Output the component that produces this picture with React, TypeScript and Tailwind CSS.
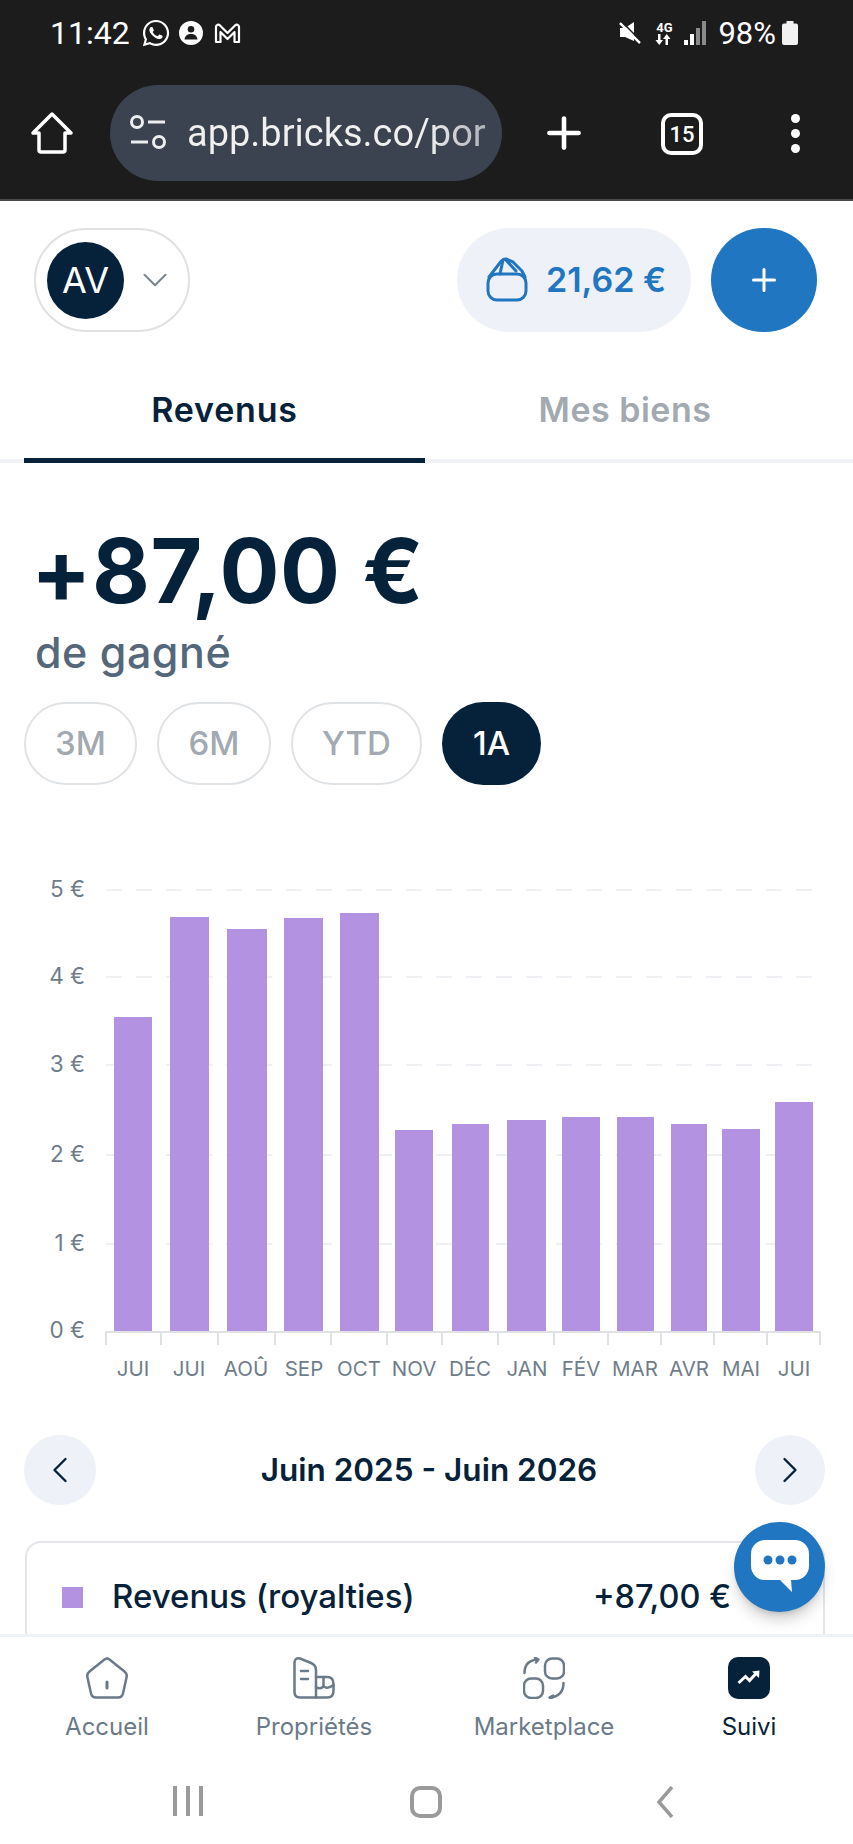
import React from "react";
import { ChevronDown, ChevronLeft, ChevronRight, Plus } from "lucide-react";
import { FaWhatsapp } from "react-icons/fa";

const bars = [
  { label: "JUI", x: 114, w: 38, top: 1016, cx: 133 },
  { label: "JUI", x: 170, w: 39, top: 916, cx: 189 },
  { label: "AOÛ", x: 227, w: 40, top: 928, cx: 246 },
  { label: "SEP", x: 284, w: 39, top: 917, cx: 304 },
  { label: "OCT", x: 340, w: 39, top: 912, cx: 359 },
  { label: "NOV", x: 395, w: 38, top: 1129, cx: 414 },
  { label: "DÉC", x: 452, w: 37, top: 1123, cx: 470 },
  { label: "JAN", x: 507, w: 39, top: 1119, cx: 527 },
  { label: "FÉV", x: 562, w: 38, top: 1116, cx: 581 },
  { label: "MAR", x: 617, w: 37, top: 1116, cx: 635 },
  { label: "AVR", x: 671, w: 36, top: 1123, cx: 689 },
  { label: "MAI", x: 722, w: 38, top: 1128, cx: 741 },
  { label: "JUI", x: 775, w: 38, top: 1101, cx: 794 },
];
const ticks = [106, 161, 218, 275, 331, 387, 442, 498, 554, 608, 661, 714, 767, 820];
const yLabels = [
  { t: "5 €", y: 889 },
  { t: "4 €", y: 976 },
  { t: "3 €", y: 1064 },
  { t: "2 €", y: 1154 },
  { t: "1 €", y: 1243 },
  { t: "0 €", y: 1330 },
];

const Chart = () => (
  <svg width="853" height="510" viewBox="0 870 853 510" className="block">
    {yLabels.slice(0, 5).map((l) => (
      <line key={l.t} x1="106" x2="820" y1={l.y} y2={l.y} stroke="#eef0f3" strokeWidth="2" strokeDasharray="16 14" />
    ))}
    {bars.map((b, i) => (
      <rect key={i} x={b.x} y={b.top} width={b.w} height={1330 - b.top} fill="#b492e2" />
    ))}
    <line x1="105" x2="821" y1="1331" y2="1331" stroke="#dfe1e5" strokeWidth="2" />
    {ticks.map((t) => (
      <line key={t} x1={t} x2={t} y1="1331" y2="1344" stroke="#dfe1e5" strokeWidth="2" />
    ))}
    {yLabels.map((l) => (
      <text key={l.t} x="85" y={l.y + 7} textAnchor="end" fontSize="22.5" fill="#6f7d8b" fontFamily="Inter, sans-serif">
        {l.t}
      </text>
    ))}
    {bars.map((b, i) => (
      <text key={i} x={b.cx} y="1375" textAnchor="middle" fontSize="20.5" fill="#6f7d8b" fontFamily="Inter, sans-serif">
        {b.label}
      </text>
    ))}
  </svg>
);

const StatusBar = () => (
  <div className="flex h-[66px] items-center justify-between pl-[50px] pr-[55px] font-[Roboto,sans-serif] text-white">
    <div className="flex items-center gap-[8px]">
      <span className="mr-[3px] text-[32px] leading-none">11:42</span>
      <FaWhatsapp className="h-[30px] w-[30px]" />
      {/* profil */}
      <svg viewBox="0 0 24 24" className="h-[24px] w-[24px]">
        <circle cx="12" cy="12" r="12" fill="white" />
        <circle cx="12" cy="8.200" r="3.300" fill="#1c1c1c" />
        <path d="M5.500 18.500c.6-4 3-5.500 6.500-5.500s5.900 1.500 6.500 5.500z" fill="#1c1c1c" />
      </svg>
      <svg viewBox="0 0 27 21" className="ml-[3px] h-[21px] w-[27px]" fill="none" stroke="white" strokeWidth="2.200" strokeLinejoin="round">
        <path d="M2 19V4C2 1.500 4.500 1 6 2.500L13.500 10 21 2.500C22.500 1 25 1.500 25 4v15h-4.500V9l-7 7-7-7v10z" />
      </svg>
    </div>
    <div className="flex items-center">
      <svg viewBox="0 0 22 24" className="h-[24px] w-[22px]" fill="white">
        <path d="M1 7h5l9-6v19l-9-4H1z" />
        <path d="M1 2l20 20" stroke="white" strokeWidth="2.500" />
        <path d="M2.500 0.500l20 20" stroke="#1c1c1c" strokeWidth="1.500" />
      </svg>
      <div className="ml-[14px] flex w-[18px] flex-col items-center">
        <span className="text-[13px] font-bold leading-[13px]">4G</span>
        <svg viewBox="0 0 18 11" className="h-[11px] w-[18px]" fill="white">
          <path d="M3 0h2.500v6H8L4.250 11 .5 6H3zM13 11h-2.500V5H8L11.750 0 15.500 5H13z" />
        </svg>
      </div>
      <svg viewBox="0 0 22 24" className="ml-[11px] h-[24px] w-[22px]">
        <rect x="0" y="19" width="4" height="5" fill="white" />
        <rect x="6" y="13" width="4" height="11" fill="white" />
        <rect x="12" y="7" width="4" height="17" fill="#8a8a8a" />
        <rect x="18" y="0" width="4" height="24" fill="#8a8a8a" />
      </svg>
      <span className="ml-[12px] text-[31px] leading-none">98%</span>
      <svg viewBox="0 0 16 24" className="ml-[6px] h-[24px] w-[16px]" fill="#f2f2f2">
        <path d="M4.500 0h7v2.500h2.500a2 2 0 0 1 2 2V22a2 2 0 0 1-2 2H2a2 2 0 0 1-2-2V4.500a2 2 0 0 1 2-2h2.500z" />
      </svg>
    </div>
  </div>
);

const BrowserBar = () => (
  <div className="flex h-[135px] items-start border-b-[2px] border-[#4a4a4a] bg-[#1c1c1c] pt-[19px] text-white">
    <div className="flex h-[96px] w-[110px] items-center justify-center pr-[6px]">
      <svg viewBox="0 0 44 44" className="h-[44px] w-[44px]" fill="none" stroke="white" strokeWidth="3.500" strokeLinejoin="round">
        <path d="M22 3L3 22h6v17a2 2 0 0 0 2 2h22a2 2 0 0 0 2-2V22h6z" />
      </svg>
    </div>
    <div className="flex h-[96px] w-[392px] items-center overflow-hidden rounded-[48px] bg-[#3c4350]">
      <svg viewBox="0 0 38 44" className="ml-[19px] h-[44px] w-[38px]" fill="none" stroke="#eceef0" strokeWidth="3">
        <circle cx="8" cy="11" r="5.500" />
        <path d="M19 11h17M2 31h17" />
        <circle cx="30" cy="31" r="5.500" />
      </svg>
      <span className="ml-[20px] whitespace-nowrap bg-gradient-to-r from-[#f0f0f0] from-80% to-[#b0b3ba] bg-clip-text font-[Roboto,sans-serif] text-[38px] leading-[46px] text-transparent">
        app.bricks.co/por
      </span>
    </div>
    <div className="flex h-[96px] w-[124px] items-center justify-center">
      <Plus size={50} strokeWidth={2.200} />
    </div>
    <div className="flex h-[96px] w-[112px] items-center justify-center pt-[2px]">
      <div className="flex h-[42px] w-[42px] items-center justify-center rounded-[10px] border-[4px] border-white font-[Roboto,sans-serif] text-[22px] font-medium">
        15
      </div>
    </div>
    <div className="flex h-[96px] flex-1 flex-col items-center justify-center gap-[6px]">
      <span className="h-[9px] w-[9px] rounded-full bg-white" />
      <span className="h-[9px] w-[9px] rounded-full bg-white" />
      <span className="h-[9px] w-[9px] rounded-full bg-white" />
    </div>
  </div>
);

const Header = () => (
  <div className="flex items-center justify-between pl-[34px] pr-[36px] pt-[27px]">
    <div className="flex h-[104px] w-[156px] items-center rounded-[52px] border-2 border-[#dfe1e4] pl-[11px]">
      <div className="flex h-[77px] w-[77px] items-center justify-center rounded-full bg-[#06223a] text-[36px] font-normal text-white">
        AV
      </div>
      <ChevronDown size={42} strokeWidth={1.200} className="ml-[10px] text-[#7d8791]" />
    </div>
    <div className="flex items-center gap-[20px]">
      <div className="flex h-[104px] w-[234px] items-center rounded-[52px] bg-[#eef1f7] pl-[21px]">
        {/* sac */}
        <svg viewBox="0 0 60 60" className="h-[60px] w-[60px]" fill="none" stroke="#2176c1" strokeWidth="3" strokeLinejoin="round" strokeLinecap="round">
          <rect x="10" y="24" width="38" height="26" rx="9" />
          <path d="M11 27L21 14Q24 9 28 9L35 12L44 21L47 27" />
          <path d="M25 10L22 24M28 10L38 21" />
        </svg>
        <span className="ml-[8px] text-[34px] font-semibold leading-none text-[#2176c1]">21,62 €</span>
      </div>
      <div className="flex h-[104px] w-[106px] items-center justify-center rounded-full bg-[#2176c1] text-white">
        <Plus size={36} strokeWidth={2} />
      </div>
    </div>
  </div>
);

const Tabs = () => (
  <div className="border-b-[4px] border-[#f0f2f5] px-[24px]">
    <div className="flex h-[127px] pr-[4px]">
      <div className="-mb-[4px] flex h-[131px] w-[401px] items-center justify-center border-b-[5px] border-[#06223a] pt-[28px] text-[34px] font-semibold tracking-[0.8px] text-[#06223a]">
        Revenus
      </div>
      <div className="flex flex-1 items-center justify-center pt-[28px] text-[34px] font-semibold tracking-[0.5px] text-[#a2a9b1]">
        Mes biens
      </div>
    </div>
  </div>
);

const periods = [
  { t: "3M", w: "w-[113px]", on: false },
  { t: "6M", w: "w-[114px]", on: false },
  { t: "YTD", w: "w-[131px]", on: false },
  { t: "1A", w: "w-[99px]", on: true },
];

const Earnings = () => (
  <div className="px-[24px]">
    <div className="pl-[7px] pt-[66px]">
      <div className="text-[89px] font-bold leading-[84px] tracking-[0.6px] text-[#06223a]">+87,00 €</div>
      <div className="ml-[4px] mt-[16px] text-[43px] font-medium leading-[46px] tracking-[0.5px] text-[#55677a]">de gagné</div>
    </div>
    <div className="mt-[27px] flex gap-[20px]">
      {periods.map((p) => (
        <div
          key={p.t}
          className={`${p.w} flex h-[83px] items-center justify-center rounded-[42px] text-[33px] font-medium ${
            p.on ? "bg-[#06223a] text-white" : "border-2 border-[#e0e3e6] text-[#a2a9b1]"
          }`}
        >
          {p.t}
        </div>
      ))}
    </div>
  </div>
);

const DateNav = () => (
  <div className="flex items-center justify-between pl-[24px] pr-[28px]">
    <div className="flex h-[70px] w-[72px] items-center justify-center rounded-full bg-[#eef1f7] text-[#06223a]">
      <ChevronLeft size={44} strokeWidth={1.300} />
    </div>
    <div className="pl-[7px] text-[31.5px] font-semibold text-[#06223a]">Juin 2025 - Juin 2026</div>
    <div className="flex h-[70px] w-[70px] items-center justify-center rounded-full bg-[#eef1f7] text-[#06223a]">
      <ChevronRight size={44} strokeWidth={1.300} />
    </div>
  </div>
);

const SummaryCard = () => (
  <div className="ml-[25px] mr-[28px] mt-[36px] h-[300px] rounded-t-[16px] border-2 border-[#e3e5e8]">
    <div className="flex h-[108px] items-center justify-between pl-[35px] pr-[92px]">
      <div className="flex items-center">
        <span className="h-[21px] w-[21px] bg-[#b492e2]" />
        <span className="ml-[29px] text-[33px] font-medium text-[#06223a]">Revenus (royalties)</span>
      </div>
      <span className="text-[32.5px] font-medium text-[#06223a]">+87,00 €</span>
    </div>
  </div>
);

const navItems = [
  { label: "Accueil", cx: "w-[214px]" },
  { label: "Propriétés", cx: "w-[200px]" },
  { label: "Marketplace", cx: "w-[260px]" },
  { label: "Suivi", cx: "w-[150px]" },
];

const NavIcon = ({ i }: { i: number }) => {
  if (i === 0)
    return (
      <svg viewBox="0 0 42 42" className="h-[42px] w-[42px]" fill="none" stroke="#6b7a89" strokeWidth="2.500" strokeLinecap="round">
        <path d="M18.500 2.500Q21 .5 23.500 2.500L38.500 14.500Q41.500 17 40.500 20.500L37 36.500Q36 40.500 32 40.500H10Q6 40.500 5 36.500L1.500 20.500Q.5 17 3.500 14.500z" />
        <path d="M21 25v6" strokeWidth="3" />
      </svg>
    );
  if (i === 1)
    return (
      <svg viewBox="0 0 42 42" className="h-[42px] w-[42px]" fill="none" stroke="#6b7a89" strokeWidth="2.500" strokeLinecap="round" strokeLinejoin="round">
        <path d="M23 40.500H7Q1.500 40.500 1.500 35V6Q1.500 .5 7 1.500L18 6Q23 8 23 13z" />
        <path d="M23 20H34Q40.500 20 40.500 27V34Q40.500 40.500 34 40.500H23" />
        <path d="M8 14h7M8 22h7M23 30Q28 33 30.500 29Q34 33 40.500 28M30.500 20v9" />
      </svg>
    );
  if (i === 2)
    return (
      <svg viewBox="0 0 42 42" className="h-[42px] w-[42px]" fill="none" stroke="#6b7a89" strokeWidth="2.500" strokeLinecap="round" strokeLinejoin="round">
        <rect x="22" y="1.500" width="19" height="20" rx="7" />
        <rect x="1" y="21.500" width="19" height="19.500" rx="7" />
        <path d="M1.500 16C1.500 8 6 3 15 2.500M12 .8L15.500 2.500L13 5.500" />
        <path d="M40.500 26C40.500 34 36 39.500 27 40.500M30 38.500L26.500 40.500L29 42" />
      </svg>
    );
  return (
    <div className="flex h-[42px] w-[42px] items-center justify-center rounded-[10px] bg-[#06223a]">
      <svg viewBox="0 0 42 42" className="h-[42px] w-[42px]" fill="none" stroke="white" strokeWidth="3">
        <path d="M10.500 26L17.500 19.500L21.500 23.500L28.500 16" />
        <path d="M24 14.500L31.500 13.500L31 21z" fill="white" stroke="none" />
      </svg>
    </div>
  );
};

const BottomNav = () => (
  <div className="flex h-[138px] shrink-0 border-t-[3px] border-[#eef1f6] bg-white pt-[19px]">
    {navItems.map((n, i) => (
      <div key={n.label} className={`${n.cx} flex flex-col items-center`}>
        <div className="flex h-[44px] items-center">
          <NavIcon i={i} />
        </div>
        <span className={`mt-[13px] text-[24px] leading-[28px] ${i === 3 ? "text-[#06223a]" : "text-[#6b7a89]"}`}>{n.label}</span>
      </div>
    ))}
  </div>
);

const AndroidNav = () => (
  <div className="flex h-[72px] shrink-0 items-start bg-white pt-[14px]">
    <div className="ml-[173px] flex h-[30px] w-[30px] justify-between">
      <span className="h-full w-[4px] bg-[#9a9a9a]" />
      <span className="h-full w-[4px] bg-[#9a9a9a]" />
      <span className="h-full w-[4px] bg-[#9a9a9a]" />
    </div>
    <div className="ml-[207px] h-[32px] w-[32px] rounded-[10px] border-[4px] border-[#9a9a9a]" />
    <svg viewBox="0 0 18 32" className="ml-[214px] h-[32px] w-[18px]" fill="none" stroke="#9a9a9a" strokeWidth="3.500">
      <path d="M16 1L3 16l13 15" />
    </svg>
  </div>
);

export default function App() {
  return (
    <div className="relative flex h-[1844px] w-[853px] flex-col overflow-hidden bg-white font-[Inter,sans-serif]">
      <div className="shrink-0 bg-[#1c1c1c]">
        <StatusBar />
        <BrowserBar />
      </div>
      <div className="min-h-0 flex-1 overflow-hidden">
        <Header />
        <Tabs />
        <Earnings />
        <div className="mt-[86px]">
          <Chart />
        </div>
        <div className="mt-[54px]">
          <DateNav />
        </div>
        <SummaryCard />
      </div>
      <BottomNav />
      <AndroidNav />
      {/* bouton chat */}
      <div className="absolute left-[734px] top-[1522px] flex h-[90px] w-[91px] items-center justify-center rounded-full bg-[#2176c1] shadow-lg shadow-black/20">
        <svg viewBox="0 0 58 54" className="h-[54px] w-[58px]">
          <path d="M14 0h30a14 14 0 0 1 14 14v12a14 14 0 0 1-14 14h-4l1 12-12-12H14A14 14 0 0 1 0 26V14A14 14 0 0 1 14 0z" fill="white" />
          <circle cx="17" cy="20" r="4.500" fill="#2176c1" />
          <circle cx="29" cy="20" r="4.500" fill="#2176c1" />
          <circle cx="41" cy="20" r="4.500" fill="#2176c1" />
        </svg>
      </div>
    </div>
  );
}
